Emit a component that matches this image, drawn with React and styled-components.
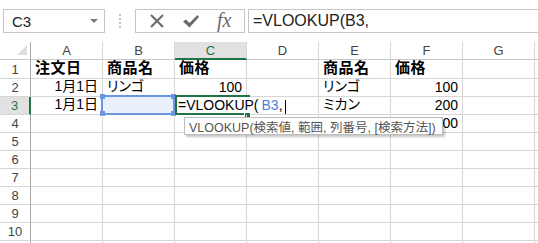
import React from 'react';
import styled, { createGlobalStyle } from 'styled-components';

const GREEN = '#217346';
const BLUE = '#6b97e2';
const GRID = '#d6d6d6';

const GlobalStyle = createGlobalStyle`
  html, body { margin: 0; padding: 0; background: #fff; overflow: hidden; }
  body { font-family: "Liberation Sans", "Noto Sans CJK JP", sans-serif; }
`;

const Page = styled.div`
  width: 538px;
  height: 243px;
  overflow: hidden;
  background: #fff;
`;

const FormulaBar = styled.div`
  display: flex;
  align-items: flex-start;
  height: 42px;
  padding-top: 9px;
  box-sizing: border-box;
`;

const NameBox = styled.div`
  margin-left: 3px;
  width: 102px;
  height: 24px;
  box-sizing: border-box;
  border: 1px solid #c6c6c6;
  display: flex;
  align-items: center;
  justify-content: space-between;
  padding: 0 6px 0 8px;
  font-size: 15px;
  color: #222;
`;

const Arrow = styled.span`
  width: 0;
  height: 0;
  border-left: 4px solid transparent;
  border-right: 4px solid transparent;
  border-top: 4px solid #777;
`;

const Grip = styled.div`
  width: 30px;
  height: 24px;
  display: flex;
  flex-direction: column;
  align-items: center;
  justify-content: center;
  gap: 2px;
`;

const GripDot = styled.span`
  width: 2px;
  height: 2px;
  background: #c4c4c4;
`;

const ButtonBox = styled.div`
  width: 110px;
  height: 24px;
  box-sizing: border-box;
  border: 1px solid #c6c6c6;
  display: flex;
  align-items: center;
  justify-content: space-around;
  padding: 0 4px;
`;

const Fx = styled.span`
  font-family: "Liberation Serif", serif;
  font-style: italic;
  font-size: 20px;
  color: #6a6a6a;
  line-height: 1;
  margin-top: -2px;
`;

const FormulaInput = styled.div`
  flex: 1;
  margin-left: 3px;
  height: 24px;
  box-sizing: border-box;
  border: 1px solid #c6c6c6;
  border-right: none;
  padding-left: 4px;
  display: flex;
  align-items: center;
  font-size: 16px;
  color: #222;
  white-space: nowrap;
`;

const Sheet = styled.div`
  position: relative;
  display: grid;
  grid-template-columns: 31px repeat(7, 72px) 1fr;
  grid-template-rows: 18px 19px repeat(11, 18px);
`;

const Corner = styled.div`
  border-right: 1px solid #ababab;
  border-bottom: 1px solid #c8c8c8;
  display: flex;
  align-items: flex-end;
  justify-content: flex-end;
  padding: 0 3px 4px 0;
`;

const ColHead = styled.div`
  display: flex;
  align-items: center;
  justify-content: center;
  font-size: 13px;
  color: ${p => (p.$active ? GREEN : '#444')};
  background: ${p => (p.$active ? '#e1e1e1' : '#fff')};
  border-right: 1px solid ${GRID};
  border-bottom: ${p => (p.$active ? `2px solid ${GREEN}` : '1px solid #c8c8c8')};
`;

const RowHead = styled.div`
  display: flex;
  align-items: center;
  justify-content: center;
  font-size: 13px;
  color: ${p => (p.$active ? GREEN : '#444')};
  background: ${p => (p.$active ? '#e1e1e1' : '#fff')};
  border-right: ${p => (p.$active ? `2px solid ${GREEN}` : '1px solid #a6a6a6')};
  border-bottom: 1px solid ${GRID};
`;

const Cell = styled.div`
  position: relative;
  display: flex;
  align-items: flex-end;
  justify-content: ${p => (p.$right ? 'flex-end' : 'flex-start')};
  padding: 0 4px 1px 4px;
  font-size: ${p => (p.$bold ? '15px' : '14px')};
  font-weight: ${p => (p.$bold ? 700 : 400)};
  font-feature-settings: ${p => (p.$right ? 'normal' : '"palt"')};
  letter-spacing: ${p => (p.$bold ? '0.5px' : '0')};
  color: #000;
  white-space: nowrap;
  border-right: 1px solid ${GRID};
  border-bottom: 1px solid ${GRID};
  background: ${p => (p.$refSel ? '#eaf0fb' : 'transparent')};

  ${p => p.$refSel && `
    &::before {
      content: '';
      position: absolute;
      left: -2px;
      top: -2px;
      right: -1px;
      bottom: -1px;
      border: 2px solid ${BLUE};
    }
  `}
`;

const Handle = styled.span`
  position: absolute;
  width: 5px;
  height: 5px;
  background: ${BLUE};
  ${p => (p.$top ? 'top: -3px;' : 'bottom: -2px;')}
  ${p => (p.$left ? 'left: -3px;' : 'right: -2px;')}
`;

const EditCell = styled.div`
  position: relative;
  grid-column: span 2;
  display: flex;
  align-items: flex-end;
  padding: 0 0 1px 3px;
  font-size: 14px;
  white-space: nowrap;
  background: #fff;
  border-right: 1px solid ${GRID};
  border-bottom: 1px solid ${GRID};

  &::before {
    content: '';
    position: absolute;
    left: 0;
    top: -2px;
    width: 73px;
    height: 16px;
    border: 2px solid ${GREEN};
    border-right: none;
  }
`;

const FillHandle = styled.span`
  position: absolute;
  left: 69px;
  top: 15px;
  width: 5px;
  height: 5px;
  background: ${GREEN};
  border: 1px solid #fff;
`;

const RefText = styled.span`
  color: #4a80dc;
  margin-left: 3px;
`;

const Caret = styled.span`
  display: inline-block;
  width: 1px;
  height: 14px;
  background: #000;
  margin-left: 2px;
  margin-bottom: -1px;
`;

const Tooltip = styled.div`
  position: absolute;
  left: 184px;
  top: 75px;
  width: 259px;
  height: 18px;
  box-sizing: border-box;
  padding: 0 4px;
  display: flex;
  align-items: center;
  background: #fff;
  border: 1px solid #bdbdbd;
  box-shadow: 2px 2px 2px rgba(0, 0, 0, 0.22);
  font-size: 12.5px;
  color: #555;
  white-space: nowrap;
`;

const cols = ['A', 'B', 'C', 'D', 'E', 'F', 'G'];

const rows = [
  [{ t: '注文日', b: 1 }, { t: '商品名', b: 1 }, { t: '価格', b: 1 }, {}, { t: '商品名', b: 1 }, { t: '価格', b: 1 }, {}],
  [{ t: '1月1日', r: 1 }, { t: 'リンゴ' }, { t: '100', r: 1 }, {}, { t: 'リンゴ' }, { t: '100', r: 1 }, {}],
  null,
  [{}, {}, {}, {}, {}, { t: '300', r: 1 }, {}],
];

function CancelIcon() {
  return (
    <svg width="16" height="16" viewBox="0 0 16 16">
      <path d="M2 2 L14 14 M14 2 L2 14" stroke="#6a6a6a" strokeWidth="2" />
    </svg>
  );
}

function EnterIcon() {
  return (
    <svg width="18" height="16" viewBox="0 0 18 16">
      <path d="M1 8.5 L4 6.5 L7.5 10 L15.5 2 L17 4 L7.5 14.5 Z" fill="#6a6a6a" />
    </svg>
  );
}

function CornerMark() {
  return (
    <svg width="10" height="10" viewBox="0 0 10 10">
      <path d="M10 0 L10 10 L0 10 Z" fill="#dedede" />
    </svg>
  );
}

function Row3() {
  return (
    <>
      <RowHead $active>3</RowHead>
      <Cell $right>1月1日</Cell>
      <Cell $refSel>
        <Handle $top $left />
        <Handle $top />
        <Handle $left />
        <Handle />
      </Cell>
      <EditCell>
        =VLOOKUP(<RefText>B3</RefText>,<Caret />
        <FillHandle />
      </EditCell>
      <Cell>ミカン</Cell>
      <Cell $right>200</Cell>
      <Cell />
      <Cell />
    </>
  );
}

export default function App() {
  return (
    <Page>
      <GlobalStyle />
      <FormulaBar>
        <NameBox>
          C3
          <Arrow />
        </NameBox>
        <Grip>
          <GripDot />
          <GripDot />
          <GripDot />
          <GripDot />
        </Grip>
        <ButtonBox>
          <CancelIcon />
          <EnterIcon />
          <Fx>fx</Fx>
        </ButtonBox>
        <FormulaInput>=VLOOKUP(B3,</FormulaInput>
      </FormulaBar>
      <Sheet>
        <Corner>
          <CornerMark />
        </Corner>
        {cols.map(c => (
          <ColHead key={c} $active={c === 'C'}>{c}</ColHead>
        ))}
        <ColHead />
        {Array.from({ length: 11 }, (_, i) => {
          const n = i + 1;
          if (n === 3) return <Row3 key={n} />;
          const data = rows[i] || [{}, {}, {}, {}, {}, {}, {}];
          return (
            <React.Fragment key={n}>
              <RowHead>{n <= 10 ? n : ''}</RowHead>
              {data.map((d, j) => (
                <Cell key={j} $bold={d.b} $right={d.r}>{d.t}</Cell>
              ))}
              <Cell />
            </React.Fragment>
          );
        })}
        <Tooltip>VLOOKUP(検索値, 範囲, 列番号, [検索方法])</Tooltip>
      </Sheet>
    </Page>
  );
}
